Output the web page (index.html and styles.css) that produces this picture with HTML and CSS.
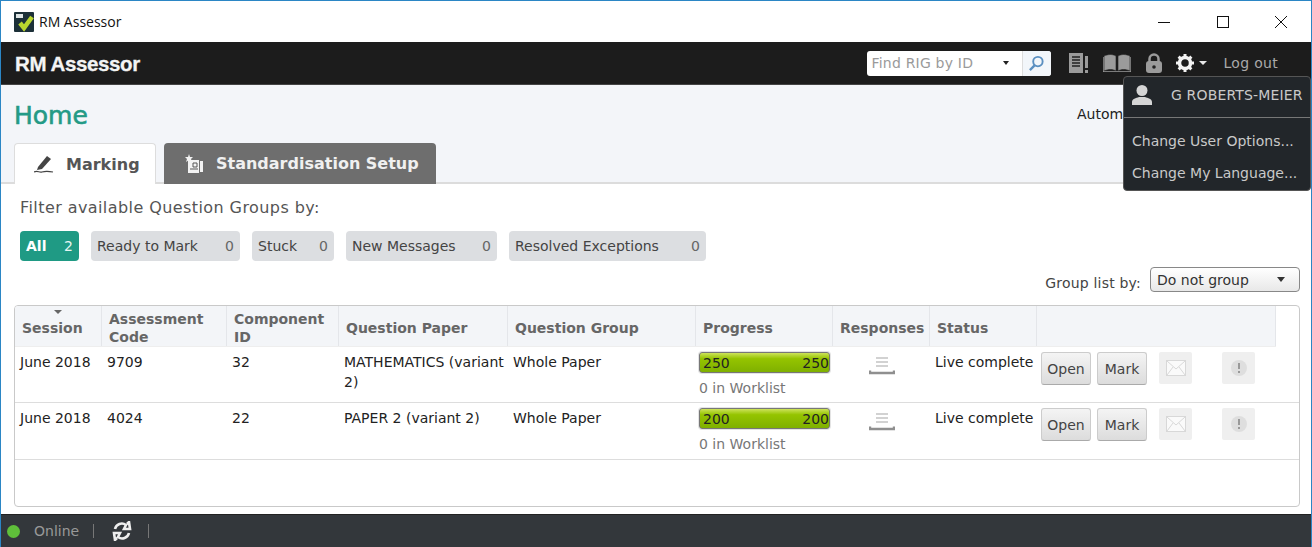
FILE: index.html
```html
<!DOCTYPE html>
<html lang="en">
<head>
<meta charset="utf-8">
<title>RM Assessor</title>
<link rel="stylesheet" href="styles.css">
</head>
<body>
<div class="window">
  <div class="titlebar">
    <svg class="app-icon" viewBox="0 0 20 20"><rect width="20" height="20" rx="1" fill="#1c3038"/><path d="M6 11l4 5 8-11" fill="none" stroke="#b9d62e" stroke-width="4.500"/><rect x="2" y="2" width="7" height="4" fill="#dfe5e5"/></svg>
    <span class="app-name">RM Assessor</span>
    <div class="win-controls">
      <svg class="win-btn" viewBox="0 0 12 12"><path d="M0 6.500h12" stroke="#111" fill="none"/></svg>
      <svg class="win-btn" viewBox="0 0 12 12"><rect x=".5" y=".5" width="11" height="11" stroke="#111" fill="none"/></svg>
      <svg class="win-btn" viewBox="0 0 12 12"><path d="M0 0l12 12M12 0L0 12" stroke="#111" fill="none"/></svg>
    </div>
  </div>

  <header class="topbar">
    <span class="logo">RM Assessor</span>
    <div class="search">
      <span class="search-text">Find RIG by ID</span>
      <span class="search-caret"></span>
      <span class="search-btn">
        <svg viewBox="0 0 18 18" width="17" height="17"><circle cx="10.500" cy="7" r="5" fill="none" stroke="#5a8fc0" stroke-width="2"/><path d="M7 11l-5 5" stroke="#5a8fc0" stroke-width="2.500"/></svg>
      </span>
    </div>
    <svg class="top-icon" width="20" height="22" viewBox="0 0 20 22"><path d="M0 1h14v20H0z" fill="#9b9b9b"/><path d="M3 5h8M3 8h8M3 11h8M3 14h8" stroke="#222" stroke-width="1.300"/><path d="M16 4h3v12h-3z" fill="#9b9b9b"/><path d="M16 18h3v3h-3z" fill="#9b9b9b"/></svg>
    <svg class="top-icon" width="28" height="18" viewBox="0 0 28 18"><path d="M1 2c4-2 9-2 12 0v15c-3-2-8-2-12 0zM15 2c3-2 8-2 12 0v15c-4-2-9-2-12 0z" fill="#9b9b9b" stroke="#222" stroke-width=".6"/><path d="M0 3v15h28V3" fill="none" stroke="#9b9b9b" stroke-width="1.400"/></svg>
    <svg class="top-icon lock" width="18" height="20" viewBox="0 0 18 20"><path d="M4.500 9V6a4.500 4.500 0 0 1 9 0v3" fill="none" stroke="#9b9b9b" stroke-width="2.500"/><rect x="1" y="8" width="16" height="12" rx="3" fill="#9b9b9b"/><circle cx="9" cy="14" r="1.800" fill="#222"/></svg>
    <svg class="gear" width="18" height="18" viewBox="0 0 18 18"><circle cx="9" cy="9" r="5.500" fill="none" stroke="#f4f4f4" stroke-width="3.500"/><path d="M9 0v18M0 9h18M2.600 2.600l12.800 12.800M15.400 2.600L2.600 15.400" stroke="#f4f4f4" stroke-width="3" stroke-dasharray="3 12 3"/></svg>
    <span class="gear-caret"></span>
    <span class="logout">Log out</span>

    <div class="user-menu">
      <div class="user-row">
        <svg width="20" height="21" viewBox="0 0 20 21"><circle cx="10" cy="6.500" r="5.500" fill="#d5d5d5"/><path d="M0 21v-3c0-3 4-4 7-5h6c3 1 7 2 7 5v3z" fill="#d5d5d5"/></svg>
        <span>G ROBERTS-MEIER</span>
      </div>
      <div class="menu-item first">Change User Options...</div>
      <div class="menu-item">Change My Language...</div>
    </div>
  </header>

  <section class="home-head">
    <div class="home-row">
      <h1 class="home-title">Home</h1>
      <span class="auto">Automatic</span>
    </div>
    <div class="tabs">
      <div class="tab active">
        <svg width="20" height="18" viewBox="0 0 20 18"><path d="M4 12l9-11 4 3-9 10-5 1z" fill="#444"/><path d="M0 17c4-2 5 1 8 0s6-1 11 0" fill="none" stroke="#444" stroke-width="1.200"/></svg>
        <span>Marking</span>
      </div>
      <div class="tab dim">
        <svg width="20" height="20" viewBox="0 0 20 20"><path d="M4 6h11v13H4z" fill="#f2f2f2"/><path d="M16 7h3v11h-3z" fill="#f2f2f2"/><path d="M9 9h4v4H9zM6 15h8" stroke="#555" fill="none"/><path d="M5 0l1 3h3L7 5l1 3-3-2-3 2 1-3-2-2h3z" fill="#f2f2f2"/></svg>
        <span>Standardisation Setup</span>
      </div>
    </div>
  </section>

  <main class="content">
    <p class="filter-label">Filter available Question Groups by:</p>
    <div class="filters">
      <div class="chip on"><span>All</span><span class="count">2</span></div>
      <div class="chip ready"><span>Ready to Mark</span><span class="count">0</span></div>
      <div class="chip stuck"><span>Stuck</span><span class="count">0</span></div>
      <div class="chip messages"><span>New Messages</span><span class="count">0</span></div>
      <div class="chip resolved"><span>Resolved Exceptions</span><span class="count">0</span></div>
    </div>
    <div class="group-row">
      <span class="group-label">Group list by:</span>
      <div class="select"><span>Do not group</span><span class="select-caret"></span></div>
    </div>

    <div class="table-box">
      <div class="row head">
        <div class="cell session"><span class="sort"></span>Session</div>
        <div class="cell">Assessment Code</div>
        <div class="cell">Component ID</div>
        <div class="cell">Question Paper</div>
        <div class="cell">Question Group</div>
        <div class="cell">Progress</div>
        <div class="cell">Responses</div>
        <div class="cell">Status</div>
        <div class="cell"></div>
      </div>

      <div class="row body">
        <div class="cell">June 2018</div>
        <div class="cell">9709</div>
        <div class="cell">32</div>
        <div class="cell">MATHEMATICS (variant 2)</div>
        <div class="cell">Whole Paper</div>
        <div class="cell prog">
          <div class="bar"><span>250</span><span>250</span></div>
          <div class="worklist">0 in Worklist</div>
        </div>
        <div class="cell resp">
          <svg width="26" height="20" viewBox="0 0 26 20"><path d="M7 2h12M7 6h12M7 10h12" stroke="#c4c4c4" stroke-width="1.600"/><path d="M1 14.500v2.500h24v-2.500" fill="none" stroke="#8f8f8f" stroke-width="2.400"/></svg>
        </div>
        <div class="cell status">Live complete</div>
        <div class="cell actions">
          <span class="btn">Open</span><span class="btn">Mark</span>
          <span class="btn-ghost mail"><svg width="20" height="16" viewBox="0 0 20 16"><rect x=".5" y=".5" width="19" height="15" fill="#fafafa" stroke="#d8d8d8"/><path d="M1 1l9 8 9-8M1 15l6-8M19 15l-6-8" fill="none" stroke="#d8d8d8"/></svg></span>
          <span class="btn-ghost warn"><svg width="18" height="18" viewBox="0 0 18 18"><circle cx="9" cy="9" r="8" fill="#dedede"/><path d="M9 4v6M9 12v2" stroke="#999" stroke-width="2"/></svg></span>
        </div>
      </div>

      <div class="row body">
        <div class="cell">June 2018</div>
        <div class="cell">4024</div>
        <div class="cell">22</div>
        <div class="cell">PAPER 2 (variant 2)</div>
        <div class="cell">Whole Paper</div>
        <div class="cell prog">
          <div class="bar"><span>200</span><span>200</span></div>
          <div class="worklist">0 in Worklist</div>
        </div>
        <div class="cell resp">
          <svg width="26" height="20" viewBox="0 0 26 20"><path d="M7 2h12M7 6h12M7 10h12" stroke="#c4c4c4" stroke-width="1.600"/><path d="M1 14.500v2.500h24v-2.500" fill="none" stroke="#8f8f8f" stroke-width="2.400"/></svg>
        </div>
        <div class="cell status">Live complete</div>
        <div class="cell actions">
          <span class="btn">Open</span><span class="btn">Mark</span>
          <span class="btn-ghost mail"><svg width="20" height="16" viewBox="0 0 20 16"><rect x=".5" y=".5" width="19" height="15" fill="#fafafa" stroke="#d8d8d8"/><path d="M1 1l9 8 9-8M1 15l6-8M19 15l-6-8" fill="none" stroke="#d8d8d8"/></svg></span>
          <span class="btn-ghost warn"><svg width="18" height="18" viewBox="0 0 18 18"><circle cx="9" cy="9" r="8" fill="#dedede"/><path d="M9 4v6M9 12v2" stroke="#999" stroke-width="2"/></svg></span>
        </div>
      </div>
    </div>
  </main>

  <footer class="statusbar">
    <span class="dot"></span>
    <span class="online">Online</span>
    <span class="sep"></span>
    <svg width="20" height="20" viewBox="0 0 20 20"><path d="M3 8a7 7 0 0 1 11-4l-2 4h6l-1-7-2 2" fill="none" stroke="#eee" stroke-width="2.600"/><path d="M17 12a7 7 0 0 1-11 4l2-4H2l1 7 2-2" fill="none" stroke="#eee" stroke-width="2.600"/></svg>
    <span class="sep"></span>
  </footer>
</div>
</body>
</html>
```

FILE: styles.css
```css
* { box-sizing: border-box; }
html, body { margin: 0; padding: 0; }
body { font-family: "DejaVu Sans", Verdana, sans-serif; font-size: 14px; color: #222; overflow: hidden; }

.window { width: 1312px; height: 547px; display: flex; flex-direction: column; border-top: 1px solid #2b86c5; border-left: 1px solid #2b86c5; border-right: 1px solid #2b86c5; background: #fff; overflow: hidden; }

.titlebar { height: 41px; flex: none; display: flex; align-items: center; padding-left: 13px; background: #fff; }
.app-icon { width: 20px; height: 20px; }
.app-name { margin-left: 5px; font-family: "Open Sans", sans-serif; font-size: 14px; color: #111; }
.win-controls { margin-left: auto; display: flex; gap: 46.5px; padding-right: 24px; }
.win-btn { width: 12px; height: 12px; display: block; }

.topbar { height: 43px; flex: none; position: relative; z-index: 2; display: flex; align-items: center; background: #1c1c1c; color: #a9a9a9; border-bottom: 1px solid #444; padding-left: 14px; }
.logo { font-family: "Liberation Sans", Arial, sans-serif; font-weight: 700; font-size: 20.5px; color: #f4f4f4; letter-spacing: -.4px; -webkit-text-stroke: .3px #f4f4f4; padding-top: 2px; }
.search { margin-left: auto; width: 184px; height: 25px; background: #fff; border-radius: 3px; display: flex; align-items: center; padding-left: 5px; color: #9a9a9a; letter-spacing: .2px; }
.search-text { flex: 1; white-space: nowrap; }
.search-caret { width: 0; height: 0; border: 3.5px solid transparent; border-top: 4px solid #222; border-bottom: 0; margin-right: 13px; }
.search-btn { width: 29px; height: 25px; border-left: 1px solid #ddd; background: #f2f6fa; border-radius: 0 3px 3px 0; display: flex; align-items: center; justify-content: center; }
.top-icon { display: block; margin-left: 14px; flex: none; }
.search + .top-icon { margin-left: 18px; }
.top-icon.lock { margin-left: 14px; }
.gear { margin-left: 13px; display: block; }
.gear-caret { width: 0; height: 0; border: 4px solid transparent; border-top: 4px solid #e8e8e8; border-bottom: 0; margin-left: 5px; }
.logout { margin-left: 17px; margin-right: 33px; white-space: nowrap; letter-spacing: .3px; }

.user-menu { position: absolute; top: 34px; right: 0; width: 188px; height: 115px; background: #22262a; border: 1px solid #555; border-radius: 4px; color: #c9c9c9; z-index: 3; }
.user-row { height: 41px; display: flex; align-items: center; padding-left: 8px; gap: 19px; border-bottom: 1px solid #777; white-space: nowrap; padding-bottom: 5px; letter-spacing: .15px; }
.menu-item { margin-left: 8px; height: 32px; line-height: 32px; white-space: nowrap; }
.menu-item.first { margin-top: 7px; }

.home-head { height: 99px; flex: none; background: #f3f5f9; border-bottom: 2px solid #dcdcdc; padding-left: 13px; display: flex; flex-direction: column; }
.home-row { height: 58px; display: flex; align-items: center; }
.home-title { margin: 0; font-family: "DejaVu Sans", sans-serif; font-weight: 400; font-size: 25px; color: #239a86; -webkit-text-stroke: .6px #239a86; padding-top: 3px; }
.auto { margin-left: auto; margin-right: 130px; white-space: nowrap; width: 104px; }
.tabs { display: flex; gap: 8px; align-items: flex-end; height: 41px; margin-bottom: -2px; }
.tab { height: 41px; display: flex; align-items: center; border-radius: 4px 4px 0 0; font-weight: 700; font-size: 16px; white-space: nowrap; }
.tab.active { width: 142px; background: #fff; border: 1px solid #ddd; border-bottom: 0; color: #555; padding-left: 19px; gap: 12px; }
.tab.dim { width: 272px; background: #6e6e6e; color: #f0f0f0; padding-left: 20px; gap: 12px; }

.content { flex: 1; position: relative; display: flex; flex-direction: column; padding: 0 11px 0 13px; min-height: 0; }
.filter-label { margin: 15px 0 0 6px; height: 18px; line-height: 18px; font-size: 16px; letter-spacing: .42px; color: #555; }
.filters { display: flex; gap: 12px; margin: 14px 0 0 6px; }
.chip { height: 30px; display: flex; align-items: center; justify-content: space-between; padding: 0 6px; background: #dcdee1; border-radius: 4px; color: #444; font-size: 14px; white-space: nowrap; }
.chip.on { background: #1f9a84; color: #fff; width: 59px; font-weight: 700; }
.chip.ready { width: 149px; }
.chip.stuck { width: 82px; }
.chip.messages { width: 151px; }
.chip.resolved { width: 197px; }
.chip .count { color: #666; font-weight: 400; }
.chip.on .count { color: #e6f5f1; }
.group-row { display: flex; justify-content: flex-end; align-items: center; gap: 9px; margin-top: 6px; }
.group-label { color: #444; padding-top: 6px; letter-spacing: .2px; }
.select { width: 150px; height: 25px; border: 1px solid #888; border-radius: 4px; background: linear-gradient(#fff, #e8e8e8); display: flex; align-items: center; justify-content: space-between; padding: 0 14px 0 6px; color: #333; }
.select-caret { width: 0; height: 0; border: 4px solid transparent; border-top: 5px solid #333; border-bottom: 0; }

.table-box { flex: none; margin-top: 13px; height: 202px; border: 1px solid #c9c9c9; border-radius: 4px; background: #fff; overflow: hidden; }
.row { display: grid; grid-template-columns: 87px 125px 112px 169px 188px 137px 97px 107px 239px; }
.row.head { height: 41px; background: #f3f5f8; font-weight: 700; color: #666; line-height: 18px; border-bottom: 1px solid #eee; width: 1261px; }
.row.head .cell { border-right: 1px solid #e4e6ea; display: flex; align-items: center; padding: 3px 6px 0 7px; position: relative; }
.row.body { height: 56px; border-bottom: 1px solid #ddd; line-height: 20px; color: #222; }
.row.body:last-child { height: 57px; }
.row.body .cell { padding: 5px 0 0 5px; }
.row.body .status { white-space: nowrap; }
.cell.session { padding-top: 6px; }
.sort { position: absolute; top: 4px; left: 39px; width: 0; height: 0; border: 4px solid transparent; border-top: 4px solid #666; border-bottom: 0; }

.row.body .prog { padding-left: 3px; padding-top: 5px; }
.bar { width: 131px; height: 21px; border: 1px solid #777; box-shadow: 0 0 0 1px #e4e4e4; border-radius: 3px; background: linear-gradient(#cde35a, #95c400 30%, #7fb000); color: #222; display: flex; align-items: center; justify-content: space-between; padding: 0 0 0 3px; }
.worklist { color: #777; margin-top: 7px; line-height: 16px; }
.row.body .resp { display: flex; justify-content: center; padding: 9px 0 0 0; }
.row.body .actions { display: flex; align-items: flex-start; gap: 6px; padding: 5px 0 0 4px; }
.btn { width: 50px; height: 33px; display: flex; align-items: center; justify-content: center; background: linear-gradient(#f4f4f4, #dcdcdc); border: 1px solid #ccc; border-bottom-color: #aaa; border-radius: 3px; color: #444; }
.btn-ghost { height: 32px; display: flex; align-items: center; justify-content: center; background: #efefef; border-radius: 2px; }
.mail { width: 33px; margin-left: 6px; }
.warn { width: 33px; margin-left: 24px; }

.statusbar { height: 33px; flex: none; margin: 7px -1px 0 -1px; background: #33373b; color: #999; display: flex; align-items: center; padding-left: 7px; border-top: 1px solid #222; }
.dot { width: 13px; height: 13px; border-radius: 50%; background: #5fbf3a; }
.online { margin-left: 14px; }
.sep { width: 1px; height: 14px; background: #777; margin: 0 18px 0 14px; }
.statusbar svg { margin-right: 2px; }
```
